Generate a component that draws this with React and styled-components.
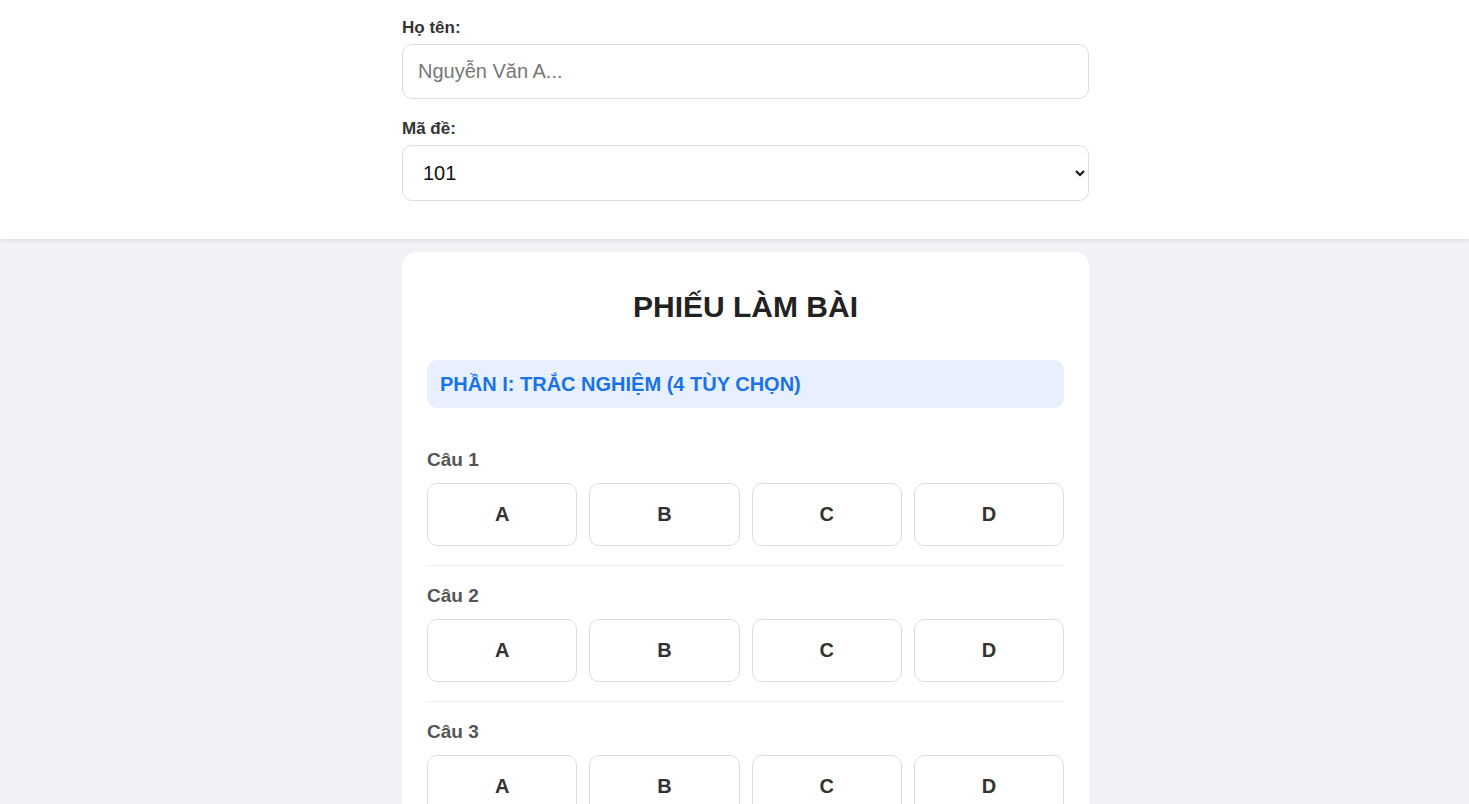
import styled, { createGlobalStyle } from "styled-components";

const GlobalStyle = createGlobalStyle`
	body {
		margin: 0;
		background: #f0f2f5;
		font-family: "Liberation Sans", Arial, sans-serif;
		color: #333;
	}
	* {
		box-sizing: border-box;
	}
`;

const Page = styled.div`
	padding-left: 22px;
`;

const Header = styled.header`
	background: #fff;
	margin-left: -22px;
	padding: 18px 0 38px 22px;
	box-shadow: 0 2px 4px rgba(0, 0, 0, 0.08);
`;

const Inner = styled.div`
	width: 687px;
	margin: 0 auto;
`;

const Label = styled.label`
	display: block;
	font-size: 17px;
	font-weight: bold;
	color: #333;
	margin-bottom: 6px;
`;

const Field = styled.div`
	margin-bottom: ${(p) => (p.$last ? "0" : "20px")};
`;

const Input = styled.input`
	width: 100%;
	height: 55px;
	padding: 0 15px;
	border: 1px solid #ddd;
	border-radius: 10px;
	font-family: inherit;
	font-size: 20px;
	color: #333;
	outline: none;

	&::placeholder {
		color: #777;
	}
`;

const Select = styled.select`
	width: 100%;
	height: 56px;
	padding: 0 2px 0 16px;
	border: 1px solid #ddd;
	border-radius: 10px;
	background: #fff;
	font-family: inherit;
	font-size: 20px;
	color: #111;
	outline: none;
`;

const Card = styled.main`
	width: 687px;
	margin: 13px auto 40px;
	background: #fff;
	border-radius: 14px;
	padding: 25px;
`;

const Title = styled.h2`
	margin: 13px 0 36px;
	text-align: center;
	font-size: 30px;
	font-weight: bold;
	color: #222;
`;

const SectionHead = styled.div`
	height: 48px;
	display: flex;
	align-items: center;
	padding: 0 13px;
	background: #e8f0fe;
	color: #1a73e8;
	border-radius: 10px;
	font-size: 20px;
	font-weight: bold;
	margin-bottom: 22px;
`;

const Question = styled.div`
	padding: 19px 0 19px;
	border-bottom: 1px solid #eee;
`;

const QLabel = styled.div`
	font-size: 19px;
	font-weight: bold;
	color: #555;
	margin-bottom: 12px;
`;

const Options = styled.div`
	display: grid;
	grid-template-columns: repeat(4, 1fr);
	gap: 12px;
`;

const Option = styled.button`
	height: 63px;
	background: #fff;
	border: 1px solid #ddd;
	border-radius: 10px;
	font-family: inherit;
	font-size: 20px;
	font-weight: bold;
	color: #333;
	cursor: pointer;
`;

const questions = [1, 2, 3];

export default function App() {
	return (
		<Page>
			<GlobalStyle />
			<Header>
				<Inner>
					<Field>
						<Label>Họ tên:</Label>
						<Input placeholder="Nguyễn Văn A..." />
					</Field>
					<Field $last>
						<Label>Mã đề:</Label>
						<Select defaultValue="101">
							<option>101</option>
							<option>102</option>
							<option>103</option>
							<option>104</option>
						</Select>
					</Field>
				</Inner>
			</Header>
			<Card>
				<Title>PHIẾU LÀM BÀI</Title>
				<SectionHead>PHẦN I: TRẮC NGHIỆM (4 TÙY CHỌN)</SectionHead>
				{questions.map((n) => (
					<Question key={n}>
						<QLabel>Câu {n}</QLabel>
						<Options>
							{["A", "B", "C", "D"].map((o) => (
								<Option key={o}>{o}</Option>
							))}
						</Options>
					</Question>
				))}
			</Card>
		</Page>
	);
}
